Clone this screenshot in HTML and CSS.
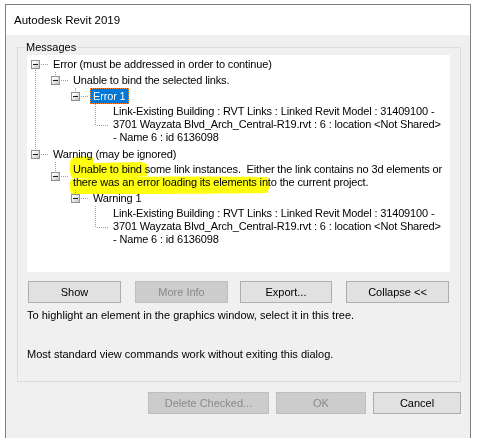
FILE: index.html
```html
<!DOCTYPE html>
<html lang="en">
<head>
<meta charset="utf-8">
<title>Autodesk Revit 2019</title>
<link rel="stylesheet" href="styles.css">
</head>
<body>
<div class="window">
  <div class="titlebar">Autodesk Revit 2019</div>
  <div class="client">
    <fieldset class="group">
      <legend>Messages</legend>
      <div class="tree">
        <ul class="tv">
          <li class="node first has-next">
            <div class="row"><span class="twig"><span class="exp"></span></span><span class="label">Error (must be addressed in order to continue)</span></div>
            <ul>
              <li class="node">
                <div class="row"><span class="twig"><span class="exp"></span></span><span class="label">Unable to bind the selected links.</span></div>
                <ul>
                  <li class="node">
                    <div class="row"><span class="twig"><span class="exp"></span></span><span class="label sel">Error 1</span></div>
                    <ul>
                      <li class="node">
                        <div class="row multi"><span class="twig"></span><span class="label detail">Link-Existing Building : RVT Links : Linked Revit Model : 31409100 -<br>3701 Wayzata Blvd_Arch_Central-R19.rvt : 6 : location &lt;Not Shared&gt;<br>- Name 6 : id 6136098</span></div>
                      </li>
                    </ul>
                  </li>
                </ul>
              </li>
            </ul>
          </li>
          <li class="node">
            <div class="row"><span class="twig"><span class="exp"></span></span><span class="label">Warning (may be ignored)</span></div>
            <ul>
              <li class="node">
                <div class="row multi"><span class="twig"><span class="exp"></span></span><span class="label two">Unable to bind some link instances.&nbsp; Either the link contains no 3d elements or<br>there was an error loading its elements into the current project.</span></div>
                <ul>
                  <li class="node">
                    <div class="row"><span class="twig"><span class="exp"></span></span><span class="label">Warning 1</span></div>
                    <ul>
                      <li class="node">
                        <div class="row multi"><span class="twig"></span><span class="label detail">Link-Existing Building : RVT Links : Linked Revit Model : 31409100 -<br>3701 Wayzata Blvd_Arch_Central-R19.rvt : 6 : location &lt;Not Shared&gt;<br>- Name 6 : id 6136098</span></div>
                      </li>
                    </ul>
                  </li>
                </ul>
              </li>
            </ul>
          </li>
        </ul>
        <svg class="marker" width="423" height="217" viewBox="0 0 423 217" aria-hidden="true">
          <defs>
            <filter id="soft" x="-5%" y="-20%" width="110%" height="140%">
              <feGaussianBlur stdDeviation="0.7"/>
            </filter>
          </defs>
          <g fill="#ffff10" filter="url(#soft)">
            <path d="M44 104 C50 101 60 101 66 103 L66 108 L114 107 C119 107 121 110 121 114 L120 121 C100 123 70 123 45 123 C42 118 42 110 44 104 Z"/>
            <path d="M44 124 C90 121 180 121 240 122 C243 125 243 134 240 138 C180 139 100 139 53 139 L52 142 C49 143 46 142 45 140 C42 135 42 128 44 124 Z"/>
          </g>
        </svg>
      </div>
      <div class="actions">
        <button class="btn w93">Show</button>
        <button class="btn w93 gap14" disabled>More Info</button>
        <button class="btn w92 gap12">Export...</button>
        <button class="btn w103 gap14">Collapse &lt;&lt;</button>
      </div>
      <p class="note first-note">To highlight an element in the graphics window, select it in this tree.</p>
      <p class="note second-note">Most standard view commands work without exiting this dialog.</p>
    </fieldset>
    <div class="footer">
      <button class="btn w121" disabled>Delete Checked...</button>
      <button class="btn w90 gap7" disabled>OK</button>
      <button class="btn w88 gap7">Cancel</button>
    </div>
  </div>
</div>
</body>
</html>
```
FILE: styles.css
```css
* { box-sizing: border-box; }

html, body {
  margin: 0;
  padding: 0;
  background: #ffffff;
  font-family: "Liberation Sans", Arial, sans-serif;
  color: #000;
}

.window {
  margin: 4px 0 0 5px;
  width: 466px;
  height: 434px;
  border: 1px solid #7f7f7f;
  border-bottom: none;
  display: flex;
  flex-direction: column;
}

.titlebar {
  height: 30px;
  line-height: 30px;
  padding-left: 8px;
  background: #ffffff;
  font-size: 11.5px;
}

.client {
  flex: 1;
  background: #f0f0f0;
  padding-top: 4px;
}

.group {
  margin: 0 9px 0 11px;
  border: 1px solid #dcdcdc;
  padding: 0 10px 19px 9px;
  min-width: 0;
}

.group legend {
  font-size: 11px;
  line-height: 16px;
  padding: 0 1px;
  margin-left: -2px;
}

.tree {
  position: relative;
  height: 217px;
  background: #ffffff;
  padding-top: 1px;
  overflow: hidden;
  font-size: 11px;
  letter-spacing: -0.15px;
}

.tree ul {
  list-style: none;
  margin: 0;
  padding: 0 0 0 20px;
}

.tree ul.tv { padding-left: 0; }

.node { position: relative; }

.node.has-next::before {
  content: "";
  position: absolute;
  left: 8px;
  top: 8px;
  bottom: 0;
  width: 1px;
  background: repeating-linear-gradient(to bottom, #a0a0a0 0 1px, transparent 1px 2px);
}

.row {
  display: flex;
  align-items: center;
  min-height: 16px;
}

.row.multi { align-items: stretch; }

.twig {
  position: relative;
  flex: none;
  width: 23px;
  align-self: stretch;
}

.twig::before {
  content: "";
  position: absolute;
  left: 8px;
  top: 0;
  height: 50%;
  width: 1px;
  background: repeating-linear-gradient(to bottom, #a0a0a0 0 1px, transparent 1px 2px);
}

.node.first > .row > .twig::before { display: none; }

.twig::after {
  content: "";
  position: absolute;
  left: 9px;
  top: 50%;
  width: 13px;
  height: 1px;
  background: repeating-linear-gradient(to right, transparent 0 1px, #a0a0a0 1px 2px);
}

.exp {
  position: absolute;
  z-index: 1;
  left: 4px;
  top: calc(50% - 4px);
  width: 9px;
  height: 9px;
  border: 1px solid #919191;
  background: linear-gradient(135deg, #ffffff 20%, #e0e0e0 60%, #c4c4c4);
}

.exp::after {
  content: "";
  position: absolute;
  left: 1px;
  top: 3px;
  width: 5px;
  height: 1px;
  background: #1a1a2a;
}

.label {
  line-height: 16px;
  padding: 0 3px;
  white-space: nowrap;
}

.label.sel {
  background: #0078d7;
  color: #ffffff;
  outline: 1px dotted #ff8728;
  outline-offset: -1px;
}

.label.detail {
  line-height: 13px;
  padding: 1px 3px 2px;
}

.label.two {
  line-height: 13px;
  padding: 1px 3px;
}

.marker {
  position: absolute;
  left: 0;
  top: 0;
  pointer-events: none;
  mix-blend-mode: multiply;
}

.actions {
  display: flex;
  margin-top: 9px;
  padding-left: 1px;
}

.btn {
  height: 22px;
  border: 1px solid #adadad;
  background: #e1e1e1;
  font-family: "Liberation Sans", Arial, sans-serif;
  font-size: 11px;
  color: #000;
  padding: 0;
  margin: 0;
  line-height: 20px;
  flex: none;
}

.btn:disabled {
  background: #cccccc;
  border-color: #bfbfbf;
  color: #8a8a8a;
}

.w93 { width: 93px; }
.w92 { width: 92px; }
.w103 { width: 103px; }
.w121 { width: 121px; }
.w90 { width: 90px; }
.w88 { width: 88px; }
.gap14 { margin-left: 14px; }
.gap12 { margin-left: 12px; }
.gap7 { margin-left: 7px; }

.note {
  margin: 0;
  font-size: 11px;
  line-height: 16px;
}

.first-note { margin-top: 4px; }
.second-note { margin-top: 23px; }

.footer {
  display: flex;
  justify-content: flex-end;
  margin: 10px 9px 0 0;
}
```
